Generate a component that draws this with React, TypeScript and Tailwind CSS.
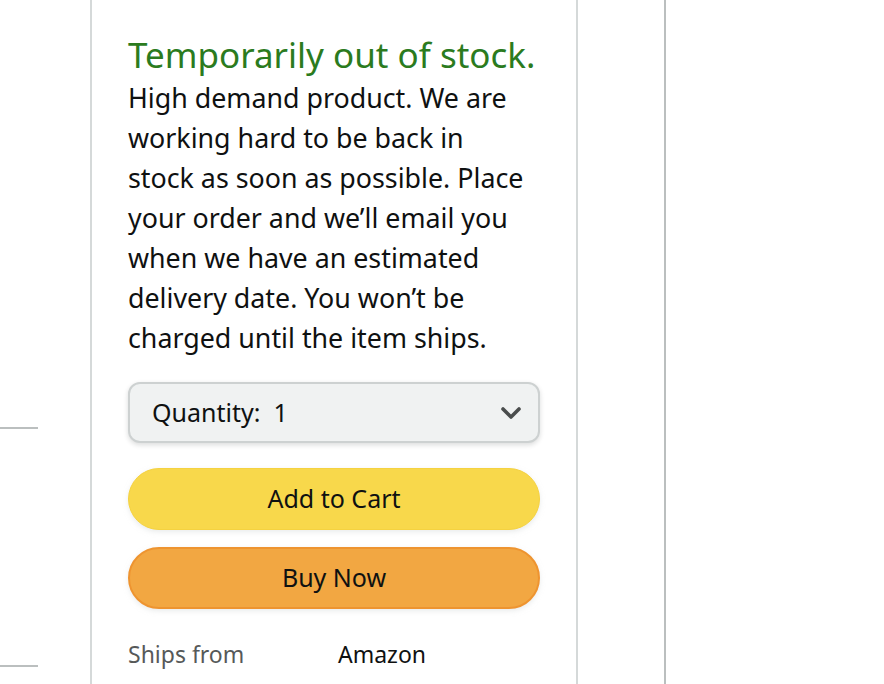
import React from "react";

const lines = [
  "High demand product. We are",
  "working hard to be back in",
  "stock as soon as possible. Place",
  "your order and we’ll email you",
  "when we have an estimated",
  "delivery date. You won’t be",
  "charged until the item ships.",
];

export default function App() {
  return (
    <div className="flex w-[884px] h-[684px] bg-white overflow-hidden" style={{ fontFamily: '"Noto Sans", "Open Sans", sans-serif' }}>
      <div className="relative w-[90px] shrink-0">
        <div className="absolute left-0 top-[427px] w-[38px] h-[2px] bg-[#bbbfbf]" />
        <div className="absolute left-0 top-[665px] w-[38px] h-[2px] bg-[#bbbfbf]" />
      </div>
      <div className="w-[488px] shrink-0 border-x-2 border-[#d5d9d9] px-[36px] pt-[32px]">
        <div className="whitespace-nowrap text-[35px] leading-[46px] text-[#2b7b1e]">Temporarily out of stock.</div>
        <div className="text-[26.8px] leading-[40px] text-[#0f1111]">
          {lines.map((l) => (
            <div key={l} className="whitespace-nowrap">{l}</div>
          ))}
        </div>
        <div className="mt-[24px] flex h-[61px] items-center justify-between rounded-[12px] border-2 border-[#cdd1d1] bg-[#f0f2f2] pl-[22px] pr-[16px] shadow-[0_2px_5px_rgba(15,17,17,0.15)]">
          <span className="text-[25px] text-[#0f1111]">Quantity:&nbsp; 1</span>
          <svg width="22" height="14" viewBox="0 0 22 14">
            <path d="M3 3 L11 11 L19 3" fill="none" stroke="#4a4d4d" strokeWidth="3.6" strokeLinecap="round" strokeLinejoin="round" />
          </svg>
        </div>
        <button className="mt-[25px] flex h-[62px] w-full items-center justify-center rounded-full border border-[#f5d240] bg-[#f8d84b] text-[25px] text-[#0f1111] shadow-[0_2px_5px_rgba(213,217,217,0.5)]">
          Add to Cart
        </button>
        <button className="mt-[17px] flex h-[62px] w-full items-center justify-center rounded-full border-2 border-[#ee9430] bg-[#f2a742] text-[25px] text-[#0f1111] shadow-[0_2px_5px_rgba(213,217,217,0.5)]">
          Buy Now
        </button>
        <div className="mt-[25px] flex text-[23px] leading-[40px]">
          <span className="w-[210px] text-[#565959]">Ships from</span>
          <span className="text-[#0f1111]">Amazon</span>
        </div>
      </div>
      <div className="w-[86px] shrink-0" />
      <div className="w-[2px] shrink-0 bg-[#bbbfbf]" />
    </div>
  );
}
